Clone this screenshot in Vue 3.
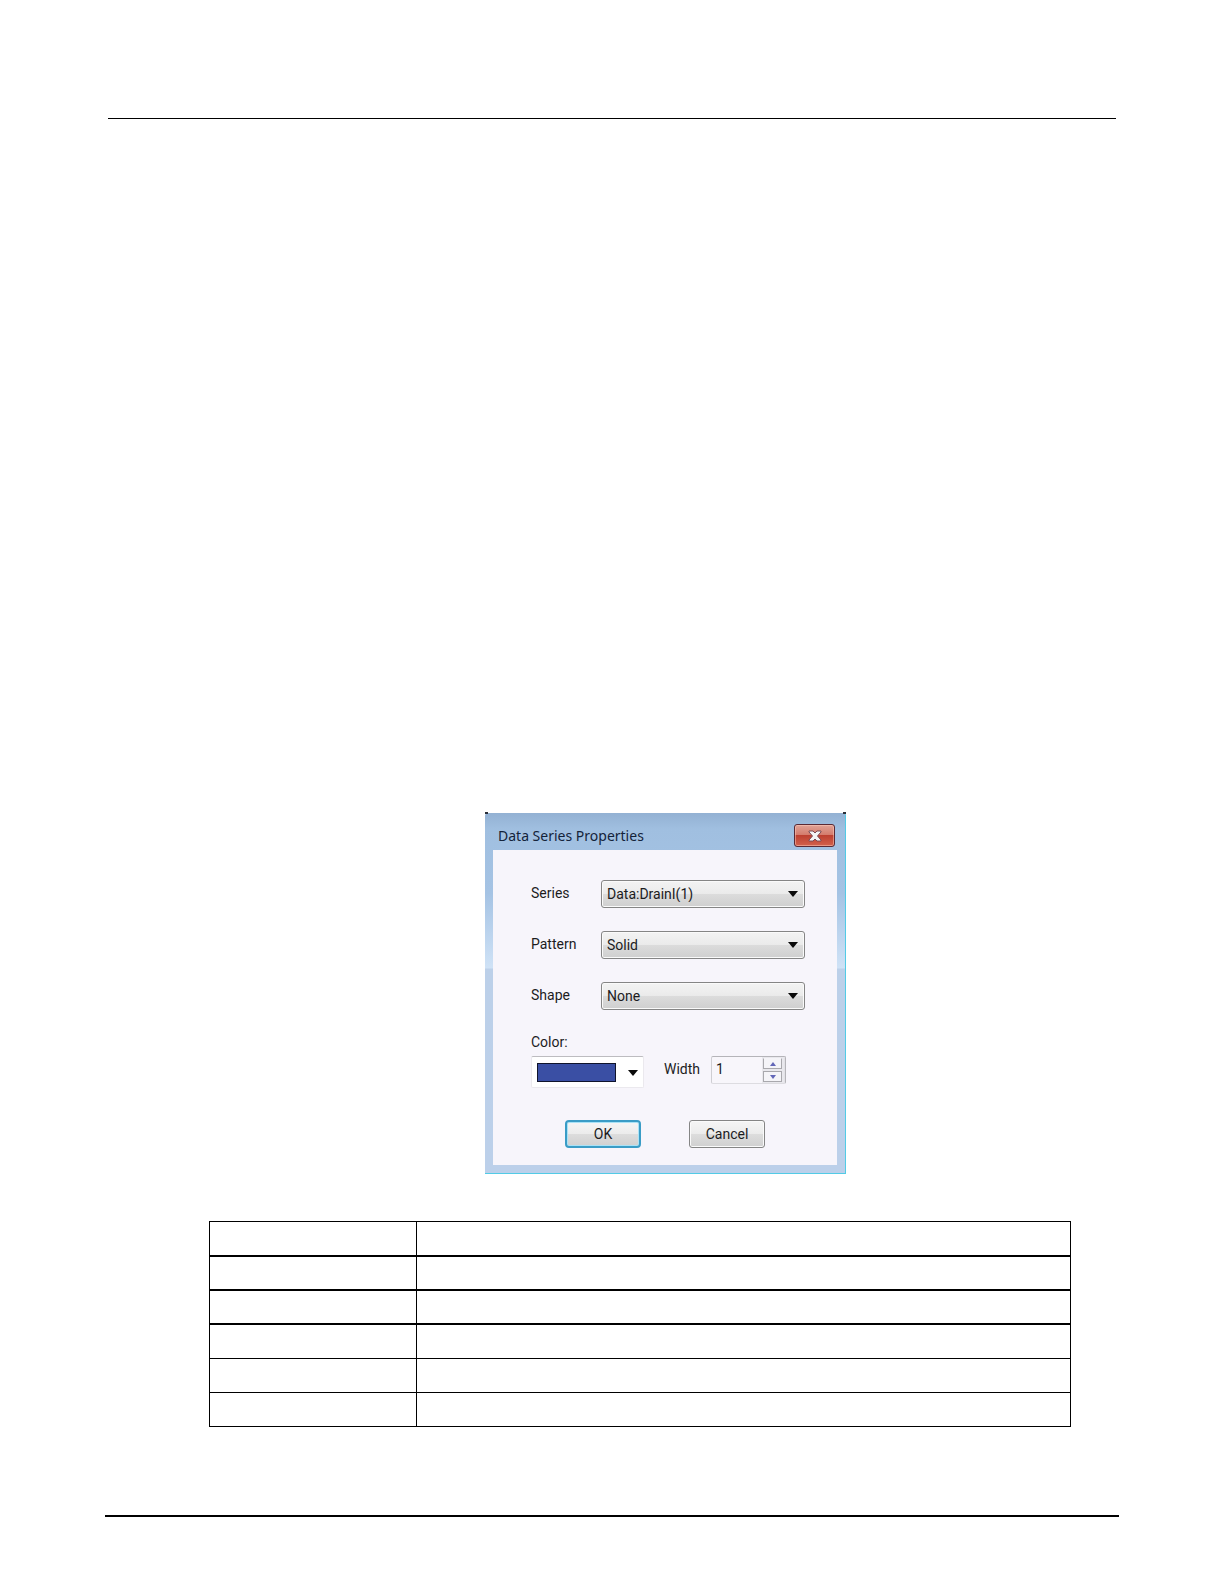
<template>
  <div class="page">
    <header class="page-header"></header>

    <main class="page-main">
      <form class="dialog" role="dialog" aria-labelledby="dialog-title" @submit.prevent>
        <div class="dialog-titlebar">
          <h1 id="dialog-title" class="dialog-title">Data Series Properties</h1>
          <button type="button" class="dialog-close" aria-label="Close">
            <svg width="14" height="12" viewBox="0 0 14 12">
              <path
                d="M1 1h4l2 2 2-2h4v1L9.500 6l3.500 4v1H9L7 9l-2 2H1v-1l3.500-4L1 2z"
                fill="#f4f4f6"
                stroke="#7a4a55"
                stroke-linejoin="round"
              />
            </svg>
          </button>
        </div>

        <div class="dialog-body">
          <div v-for="field in fields" :key="field.id" class="field">
            <label class="field-label" :for="field.id">{{ field.label }}</label>
            <div class="dropdown">
              <select :id="field.id" v-model="field.value" class="dropdown-select">
                <option>{{ field.value }}</option>
              </select>
              <svg class="dropdown-arrow" width="10" height="6" viewBox="0 0 10 6">
                <path d="M0 0h10L5 6z" fill="#0a0a0a" />
              </svg>
            </div>
          </div>

          <label class="color-label" for="color">Color:</label>
          <div class="style-row">
            <div class="color-picker">
              <select id="color" v-model="color" class="color-select">
                <option v-for="c in colors" :key="c" :value="c"></option>
              </select>
              <span class="color-swatch" :style="{ backgroundColor: color }"></span>
              <svg class="color-arrow" width="10" height="6" viewBox="0 0 10 6">
                <path d="M0 0h10L5 6z" fill="#0a0a0a" />
              </svg>
            </div>

            <label class="width-label" for="width">Width</label>
            <div class="spinner">
              <input id="width" v-model.number="width" type="number" min="1" class="spinner-input" />
              <div class="spinner-buttons">
                <button type="button" class="spinner-button" aria-label="Increase" @click="width++">
                  <svg width="8" height="4" viewBox="0 0 8 4"><path d="M4 0l3 4H1z" fill="#6266b8" /></svg>
                </button>
                <button type="button" class="spinner-button" aria-label="Decrease" @click="decrease">
                  <svg width="8" height="4" viewBox="0 0 8 4"><path d="M1 0h6L4 4z" fill="#6266b8" /></svg>
                </button>
              </div>
            </div>
          </div>

          <div class="actions">
            <button type="submit" class="button button-default">OK</button>
            <button type="button" class="button">Cancel</button>
          </div>
        </div>
      </form>

      <table class="info-table">
        <tbody>
          <tr v-for="row in 6" :key="row" :class="{ heavy: row <= 3 }">
            <td class="info-name"></td>
            <td></td>
          </tr>
        </tbody>
      </table>
    </main>

    <footer class="page-footer"></footer>
  </div>
</template>

<script setup>
import { reactive, ref } from 'vue';

const fields = reactive([
  { id: 'series', label: 'Series', value: 'Data:DrainI(1)' },
  { id: 'pattern', label: 'Pattern', value: 'Solid' },
  { id: 'shape', label: 'Shape', value: 'None' },
]);

const colors = ['#3a4fa4', '#c0392b', '#2e8b57'];
const color = ref(colors[0]);
const width = ref(1);

const decrease = () => {
  if (width.value > 1) width.value--;
};
</script>

<style>
body {
  background: #fff;
}
</style>

<style scoped>
* {
  box-sizing: border-box;
}

.page {
  display: flex;
  flex-direction: column;
  min-height: 100vh;
  font-family: Roboto, "Liberation Sans", sans-serif;
  font-size: 14px;
  color: #1c1c1e;
}

.page-header {
  height: 119px;
  margin: 0 108px;
  border-bottom: 1px solid #000;
}

.page-main {
  flex: 1;
  display: flex;
  flex-direction: column;
  justify-content: flex-end;
  padding: 40px 153px 88px 209px;
}

.page-footer {
  height: 69px;
  margin: 0 105px;
  border-top: 2px solid #000;
}

/* Dialog window */
.dialog {
  position: relative;
  align-self: center;
  width: 361px;
  margin: 0 0 47px 51px;
  padding: 0 9px 9px 8px;
  border-radius: 3px 3px 0 0;
  background: linear-gradient(#93b1d3 0, #a0bfe0 16px, #a5c3e4 80px, #cfe2f6 155px, #bcd0e9 156px, #bcd0ea 100%);
  box-shadow: inset -1px -1px 0 #52cbe6;
}

/* Dark specks left at the rounded top corners */
.dialog::before,
.dialog::after {
  content: "";
  position: absolute;
  top: -1px;
  width: 3px;
  height: 2px;
  background: #2b2f38;
}
.dialog::before {
  left: 0;
}
.dialog::after {
  right: 0;
}

.dialog-titlebar {
  display: flex;
  align-items: center;
  justify-content: space-between;
  height: 37px;
  padding: 8px 2px 0 5px;
}

.dialog-title {
  margin: 0;
  font-family: "Noto Sans", "Open Sans", sans-serif;
  font-size: 14px;
  font-weight: 400;
  line-height: 20px;
  color: #14233a;
}

.dialog-close {
  display: flex;
  align-items: center;
  justify-content: center;
  width: 41px;
  height: 23px;
  padding: 0;
  border: 1px solid #5a2a35;
  border-radius: 3px;
  background: linear-gradient(#e0a397 0, #d47a6b 48%, #bd4031 50%, #d2614c 100%);
  box-shadow: inset 0 0 0 1px rgba(255, 205, 190, 0.5);
}

.dialog-body {
  padding: 30px 32px 17px 38px;
  background: #f7f5fb;
}

.field {
  display: flex;
  margin-bottom: 23px;
}

.field-label {
  width: 70px;
  line-height: 26px;
}

.dropdown {
  position: relative;
  flex: 1;
}

.dropdown-select {
  display: block;
  appearance: none;
  width: 100%;
  height: 28px;
  padding: 0 24px 0 5px;
  border: 1px solid #858585;
  border-radius: 3px;
  background: linear-gradient(#f3f3f3 0, #ebebeb 48%, #dcdcdc 50%, #cfcfcf 100%);
  box-shadow: inset 0 0 0 1px #fafafa;
  font: inherit;
  color: inherit;
}

.dropdown-arrow {
  position: absolute;
  top: 11px;
  right: 7px;
  pointer-events: none;
}

.color-label {
  display: block;
  margin-top: -1px;
  margin-bottom: 4px;
  line-height: 20px;
}

.style-row {
  display: flex;
  align-items: flex-start;
}

.color-picker {
  position: relative;
  width: 113px;
}

.color-select {
  display: block;
  appearance: none;
  width: 100%;
  height: 32px;
  border: 1px solid #ebe9ee;
  border-top-color: #bdbcc0;
  border-radius: 2px;
  background: #fff;
}

.color-swatch {
  position: absolute;
  top: 7px;
  left: 6px;
  width: 79px;
  height: 19px;
  border: 1px solid #10142c;
  pointer-events: none;
}

.color-arrow {
  position: absolute;
  top: 14px;
  right: 6px;
  pointer-events: none;
}

.width-label {
  width: 47px;
  margin-left: 20px;
  line-height: 26px;
}

.spinner {
  display: flex;
  width: 75px;
  height: 28px;
  border: 1px solid #b5b4b9;
  border-left-color: #cfced3;
  border-bottom-color: #dddce1;
  border-radius: 2px;
  background: #f8f6fb;
}

.spinner-input {
  flex: 1;
  min-width: 0;
  padding: 0 0 2px 4px;
  border: 0;
  background: transparent;
  font: inherit;
  color: inherit;
  appearance: textfield;
}
.spinner-input::-webkit-inner-spin-button {
  display: none;
}

.spinner-buttons {
  display: flex;
  flex-direction: column;
  gap: 2px;
  padding: 1px 2px 1px 1px;
  border-right: 1px solid #e3e2e7;
  background: #e9e8ed;
}

.spinner-button {
  display: flex;
  align-items: center;
  justify-content: center;
  width: 19px;
  height: 11px;
  padding: 0;
  border: 1px solid #a9a8ad;
  background: #f5f4f8;
}
.spinner-button:first-child {
  border-top-color: #f5f4f8;
}

.actions {
  display: flex;
  gap: 48px;
  margin-top: 32px;
  padding-left: 34px;
}

.button {
  width: 76px;
  height: 28px;
  padding: 0;
  border: 1px solid #858585;
  border-radius: 3px;
  background: linear-gradient(#f5f5f5 0, #ececec 48%, #dddddd 50%, #d0d0d0 100%);
  box-shadow: inset 0 0 0 1px #fafafa;
  font: inherit;
  color: inherit;
}
.button-default {
  border: 2px solid #3a9cc6;
  border-radius: 4px;
  box-shadow: inset 0 0 0 1px #a9e2f6;
}

/* Description table */
.info-table {
  width: 100%;
  border-collapse: separate;
  border-spacing: 0;
  border-top: 1px solid #000;
  border-left: 1px solid #000;
}
.info-table td {
  height: 34px;
  padding: 0;
  border-right: 1px solid #000;
  border-bottom: 1px solid #000;
}
.info-table tr:first-child td {
  height: 35px;
}
.info-table .heavy td {
  border-bottom-width: 2px;
}
.info-table .info-name {
  width: 24%;
}
</style>
